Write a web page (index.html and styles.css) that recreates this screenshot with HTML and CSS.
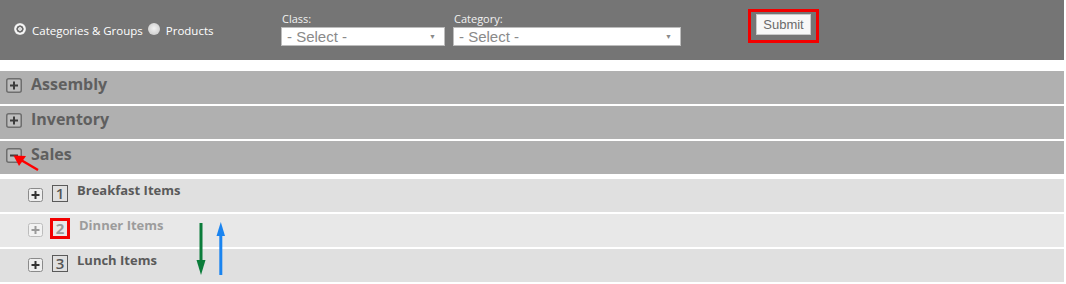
FILE: index.html
```html
<!DOCTYPE html>
<html>
<head>
<meta charset="utf-8">
<link rel="stylesheet" href="styles.css">
</head>
<body>
<div class="page">
  <div class="toolbar">
    <div class="radios">
      <span class="radio checked"></span><span class="rlabel">Categories &amp; Groups</span>
      <span class="radio"></span><span class="rlabel">Products</span>
    </div>
    <div class="field field-class">
      <div class="flabel">Class:</div>
      <div class="select"><span>- Select -</span><span class="caret">&#9660;</span></div>
    </div>
    <div class="field field-cat">
      <div class="flabel">Category:</div>
      <div class="select"><span>- Select -</span><span class="caret">&#9660;</span></div>
    </div>
    <div class="submit-wrap"><button class="submit">Submit</button></div>
  </div>

  <div class="tree">
    <div class="group">
      <svg class="tog" width="16" height="15" viewBox="0 0 16 15"><rect x="0.75" y="0.75" width="14.5" height="13.5" rx="2" fill="#bdbdbd" stroke="#6e6e6e" stroke-width="1.5"/><path d="M4 7.5H12M8 3.5V11.5" stroke="#3c3c3c" stroke-width="2"/></svg>
      <span class="gtitle">Assembly</span>
    </div>
    <div class="group">
      <svg class="tog" width="16" height="15" viewBox="0 0 16 15"><rect x="0.75" y="0.75" width="14.5" height="13.5" rx="2" fill="#bdbdbd" stroke="#6e6e6e" stroke-width="1.5"/><path d="M4 7.5H12M8 3.5V11.5" stroke="#3c3c3c" stroke-width="2"/></svg>
      <span class="gtitle">Inventory</span>
    </div>
    <div class="group open">
      <svg class="tog" width="16" height="15" viewBox="0 0 16 15"><rect x="0.75" y="0.75" width="14.5" height="13.5" rx="2" fill="#bdbdbd" stroke="#6e6e6e" stroke-width="1.5"/><path d="M4 7.5H12" stroke="#3c3c3c" stroke-width="2"/></svg>
      <span class="gtitle">Sales</span>
    </div>

    <div class="item">
      <svg class="stog" width="15" height="14" viewBox="0 0 15 14"><rect x="0.5" y="0.5" width="14" height="13" rx="2" fill="#eeeeee" stroke="#8a8a8a"/><path d="M3.5 7H11.5M7.5 3V11" stroke="#333" stroke-width="2"/></svg>
      <span class="num">1</span>
      <span class="ititle">Breakfast Items</span>
    </div>
    <div class="item faded">
      <svg class="stog" width="15" height="14" viewBox="0 0 15 14"><rect x="0.5" y="0.5" width="14" height="13" rx="2" fill="#f2f2f2" stroke="#bcbcbc"/><path d="M3.5 7H11.5M7.5 3V11" stroke="#9a9a9a" stroke-width="2"/></svg>
      <span class="num marked">2</span>
      <span class="ititle">Dinner Items</span>
    </div>
    <div class="item">
      <svg class="stog" width="15" height="14" viewBox="0 0 15 14"><rect x="0.5" y="0.5" width="14" height="13" rx="2" fill="#eeeeee" stroke="#8a8a8a"/><path d="M3.5 7H11.5M7.5 3V11" stroke="#333" stroke-width="2"/></svg>
      <span class="num">3</span>
      <span class="ititle">Lunch Items</span>
    </div>
  </div>

  <svg class="annot" width="1066" height="284" viewBox="0 0 1066 284">
    <line x1="38" y1="170" x2="21" y2="160" stroke="#f00" stroke-width="2.5"/>
    <polygon points="13.5,155.5 26,156 19,166" fill="#f00"/>
    <rect x="199.5" y="223" width="3" height="39" fill="#0b7c3a"/>
    <polygon points="196.5,260 205.5,260 201,275" fill="#0b7c3a"/>
    <polygon points="216.5,236 225,236 220.8,222" fill="#1a84f0"/>
    <rect x="219.3" y="234" width="3" height="41" fill="#1a84f0"/>
  </svg>
</div>
</body>
</html>
```

FILE: styles.css
```css
html, body {
  margin: 0;
  padding: 0;
  background: #ffffff;
}

.page {
  position: relative;
  width: 1064px;
  height: 284px;
  overflow: hidden;
  font-family: "Open Sans", "Liberation Sans", sans-serif;
}

.toolbar {
  height: 60px;
  background: #757575;
  display: flex;
  align-items: flex-start;
  padding-left: 14px;
}

.radios {
  width: 267px;
  display: flex;
  align-items: flex-start;
  margin-top: 23px;
  color: #ffffff;
  font-size: 11.5px;
  line-height: 16px;
}

.radio {
  width: 12px;
  height: 12px;
  border-radius: 50%;
  background: radial-gradient(circle at 50% 45%, #f2f2f2 0, #d2d2d2 70%, #c4c4c4 100%);
  flex: none;
}

.radio.checked {
  background: radial-gradient(circle, #d8d8d8 0 1.6px, #6a6a6a 2.2px 3.3px, #f6f6f6 3.9px 5px, #cfcfcf 6px);
}

.rlabel {
  margin-left: 6px;
  margin-right: 5px;
}

.field {
  margin-top: 10px;
}

.flabel {
  height: 17px;
  line-height: 17px;
  font-size: 11px;
  color: #f2f2f2;
  padding-left: 1px;
}

.select {
  box-sizing: border-box;
  height: 19px;
  background: #ffffff;
  border: 1px solid #bdbdbd;
  display: flex;
  align-items: center;
  justify-content: space-between;
  padding: 0 8px 0 5px;
  font-family: "Liberation Sans", Arial, sans-serif;
  font-size: 15px;
  color: #8a8a8a;
  line-height: 17px;
}

.caret {
  font-size: 7px;
  color: #8a8a8a;
}

.field-class .select {
  width: 164px;
}

.field-cat {
  margin-left: 8px;
}

.field-cat .select {
  width: 228px;
}

.submit-wrap {
  margin-top: 9px;
  margin-left: 67px;
  border: 3px solid #f20000;
  padding: 2px 5px 5px 5px;
  display: flex;
}

.submit {
  box-sizing: border-box;
  width: 55px;
  height: 21px;
  background: #f7f7f7;
  border: 1px solid #c9c9c9;
  border-radius: 0;
  font-family: "Liberation Sans", Arial, sans-serif;
  font-size: 13px;
  color: #6a6a6a;
  padding: 0;
}

.tree {
  margin-top: 11px;
}

.group {
  box-sizing: border-box;
  height: 33px;
  margin-bottom: 2px;
  background: #b0b0b0;
  display: flex;
  align-items: flex-start;
  padding: 4px 0 0 6px;
}

.group.open {
  margin-bottom: 5px;
}

.tog {
  margin-top: 3px;
  flex: none;
}

.gtitle {
  margin-left: 9px;
  font-size: 16px;
  line-height: 18px;
  font-weight: 700;
  color: #5f5f5f;
}

.item {
  box-sizing: border-box;
  height: 33px;
  margin-bottom: 2px;
  background: #e0e0e0;
  display: flex;
  align-items: flex-start;
  padding: 3px 0 0 28px;
}

.item.faded {
  background: #e8e8e8;
}

.stog {
  margin-top: 6px;
  flex: none;
}

.num {
  box-sizing: border-box;
  margin-left: 9px;
  margin-top: 3px;
  width: 16px;
  height: 17px;
  border: 1px solid #5a5a5a;
  font-size: 15px;
  line-height: 15px;
  font-weight: 600;
  text-align: center;
  color: #555555;
}

.num.marked {
  border-color: transparent;
  outline: 3px solid #f20000;
  outline-offset: -1px;
  color: #9a9a9a;
  font-weight: 700;
}

.ititle {
  margin-left: 9px;
  font-size: 13px;
  line-height: 16px;
  font-weight: 700;
  color: #5a5a5a;
}

.item.faded .ititle {
  color: #9c9c9c;
  margin-left: 11px;
}

.annot {
  position: absolute;
  left: 0;
  top: 0;
  pointer-events: none;
}
```
